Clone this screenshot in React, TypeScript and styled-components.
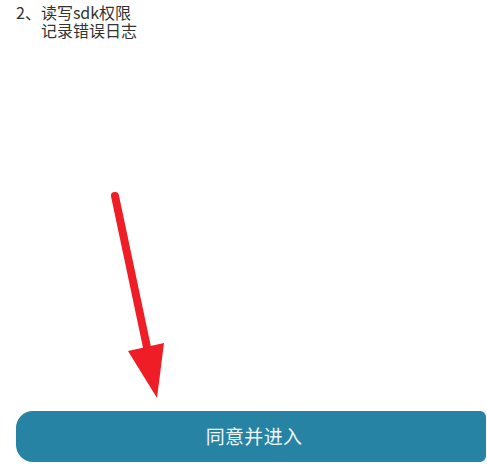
import React from "react";
import styled, { createGlobalStyle } from "styled-components";

const Global = createGlobalStyle`
  html, body { margin: 0; padding: 0; background: #ffffff; }
  body { font-family: "Noto Sans CJK SC", "Noto Sans", sans-serif; }
`;

const Page = styled.div`
  position: relative;
  width: 487px;
  height: 464px;
  overflow: hidden;
  display: flex;
  flex-direction: column;
  background: #ffffff;
`;

const Notes = styled.div`
  padding: 3px 0 0 16px;
  color: #333333;
  font-size: 16px;
  line-height: 18px;
`;

const Line = styled.div<{ $indent?: boolean }>`
  padding-left: ${(p) => (p.$indent ? "25px" : "0")};
  white-space: nowrap;
`;

const Spacer = styled.div`
  flex: 1;
`;

const Footer = styled.div`
  padding: 0 1px 2px 16px;
`;

const AgreeButton = styled.button`
  width: 100%;
  height: 51px;
  border: none;
  border-radius: 17px 6px 6px 17px;
  background: #2683a3;
  color: #eef5f8;
  font-family: "Noto Sans CJK SC", "Noto Sans", sans-serif;
  font-size: 19px;
  letter-spacing: 0.3px;
  padding: 0 0 2px 6px;
  display: flex;
  align-items: center;
  justify-content: center;
`;

const ArrowLayer = styled.svg`
  position: absolute;
  left: 0;
  top: 0;
  pointer-events: none;
`;

export default function App() {
  return (
    <>
      <Global />
      <Page>
        <Notes>
          <Line>2、读写sdk权限</Line>
          <Line $indent>记录错误日志</Line>
        </Notes>
        <Spacer />
        <Footer>
          <AgreeButton>同意并进入</AgreeButton>
        </Footer>
        <ArrowLayer width="487" height="464" viewBox="0 0 487 464">
          <line
            x1="115"
            y1="196"
            x2="148"
            y2="352"
            stroke="#ee1d26"
            strokeWidth="8"
            strokeLinecap="round"
          />
          <polygon points="128,351 164,343 157,398" fill="#ee1d26" />
        </ArrowLayer>
      </Page>
    </>
  );
}
